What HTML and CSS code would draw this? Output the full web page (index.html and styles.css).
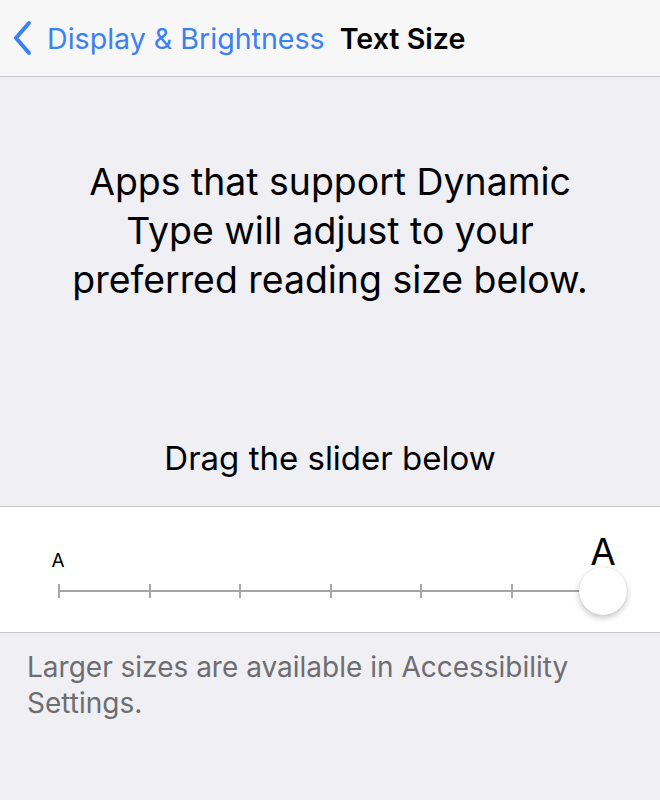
FILE: index.html
```html
<!DOCTYPE html>
<html lang="en">
<head>
  <meta charset="UTF-8" />
  <meta name="viewport" content="width=device-width, initial-scale=1.0"/>
  <title>Text Size</title>
  <link rel="stylesheet" href="styles.css">
</head>
<body>
  <header class="navbar">
    <a class="back" href="#">
      <svg class="chevron" width="20" height="36" viewBox="0 0 20 36">
        <path d="M17 3 L4 18 L17 33" fill="none" stroke="#3a80f6" stroke-width="4" stroke-linecap="round" stroke-linejoin="round"/>
      </svg>
      <span>Display &amp; Brightness</span>
    </a>
    <h1 class="title">Text Size</h1>
  </header>

  <section class="intro">
    <p class="lead">Apps that support Dynamic Type will adjust to your preferred reading size below.</p>
    <p class="hint">Drag the slider below</p>
  </section>

  <section class="panel">
    <div class="slider">
      <div class="labels">
        <span class="small-a">A</span>
        <span class="big-a">A</span>
      </div>
      <div class="track">
        <span class="tick"></span>
        <span class="tick"></span>
        <span class="tick"></span>
        <span class="tick"></span>
        <span class="tick"></span>
        <span class="tick"></span>
        <span class="tick"></span>
        <span class="thumb"></span>
      </div>
    </div>
  </section>

  <p class="footnote">Larger sizes are available in Accessibility Settings.</p>
</body>
</html>
```

FILE: styles.css
```css
body {
  margin: 0;
  background: #efeff4;
  font-family: 'Inter', 'Roboto', sans-serif;
  color: #000;
  width: 660px;
  height: 800px;
  overflow: hidden;
}

.navbar {
  height: 76px;
  background: #f7f7f8;
  border-bottom: 1px solid #c8c7cc;
  display: flex;
  align-items: center;
  padding-left: 12px;
  box-sizing: content-box;
}

.back {
  display: flex;
  align-items: center;
  gap: 15px;
  color: #3a80f6;
  text-decoration: none;
  font-size: 28.6px;
}

.chevron {
  display: block;
}

.title {
  margin: 0 0 0 15px;
  font-size: 28.6px;
  font-weight: 600;
}

.intro {
  height: 429px;
  padding-top: 80px;
  box-sizing: border-box;
  text-align: center;
}

.lead {
  margin: 0 auto;
  width: 560px;
  font-size: 37.4px;
  line-height: 49px;
}

.hint {
  margin: 134px 0 0;
  font-size: 33px;
  line-height: 40px;
}

.panel {
  background: #fff;
  border-top: 1px solid #c8c7cc;
  border-bottom: 1px solid #c8c7cc;
  height: 127px;
  padding-top: 26px;
  box-sizing: border-box;
}

.slider {
  width: 545px;
  margin-left: 58px;
}

.labels {
  display: flex;
  justify-content: space-between;
  align-items: flex-end;
  margin: 0 -20px;
  line-height: 1;
}

.labels span {
  width: 40px;
  text-align: center;
}

.small-a {
  font-size: 19px;
}

.big-a {
  font-size: 37px;
}

.track {
  position: relative;
  margin-top: 14px;
  height: 14px;
  display: flex;
  justify-content: space-between;
  align-items: center;
  background: linear-gradient(#a5a5a5, #a5a5a5) center / 100% 2px no-repeat;
}

.tick {
  width: 2px;
  height: 14px;
  background: #a5a5a5;
}

.thumb {
  position: absolute;
  right: -24px;
  top: -17px;
  width: 48px;
  height: 48px;
  border-radius: 50%;
  background: #fff;
  box-shadow: 0 3px 6px rgba(0, 0, 0, 0.22), 0 0 1px rgba(0, 0, 0, 0.2);
}

.footnote {
  margin: 0;
  padding: 16px 27px 0;
  font-size: 28px;
  line-height: 36px;
  color: #6d6d72;
}
```
